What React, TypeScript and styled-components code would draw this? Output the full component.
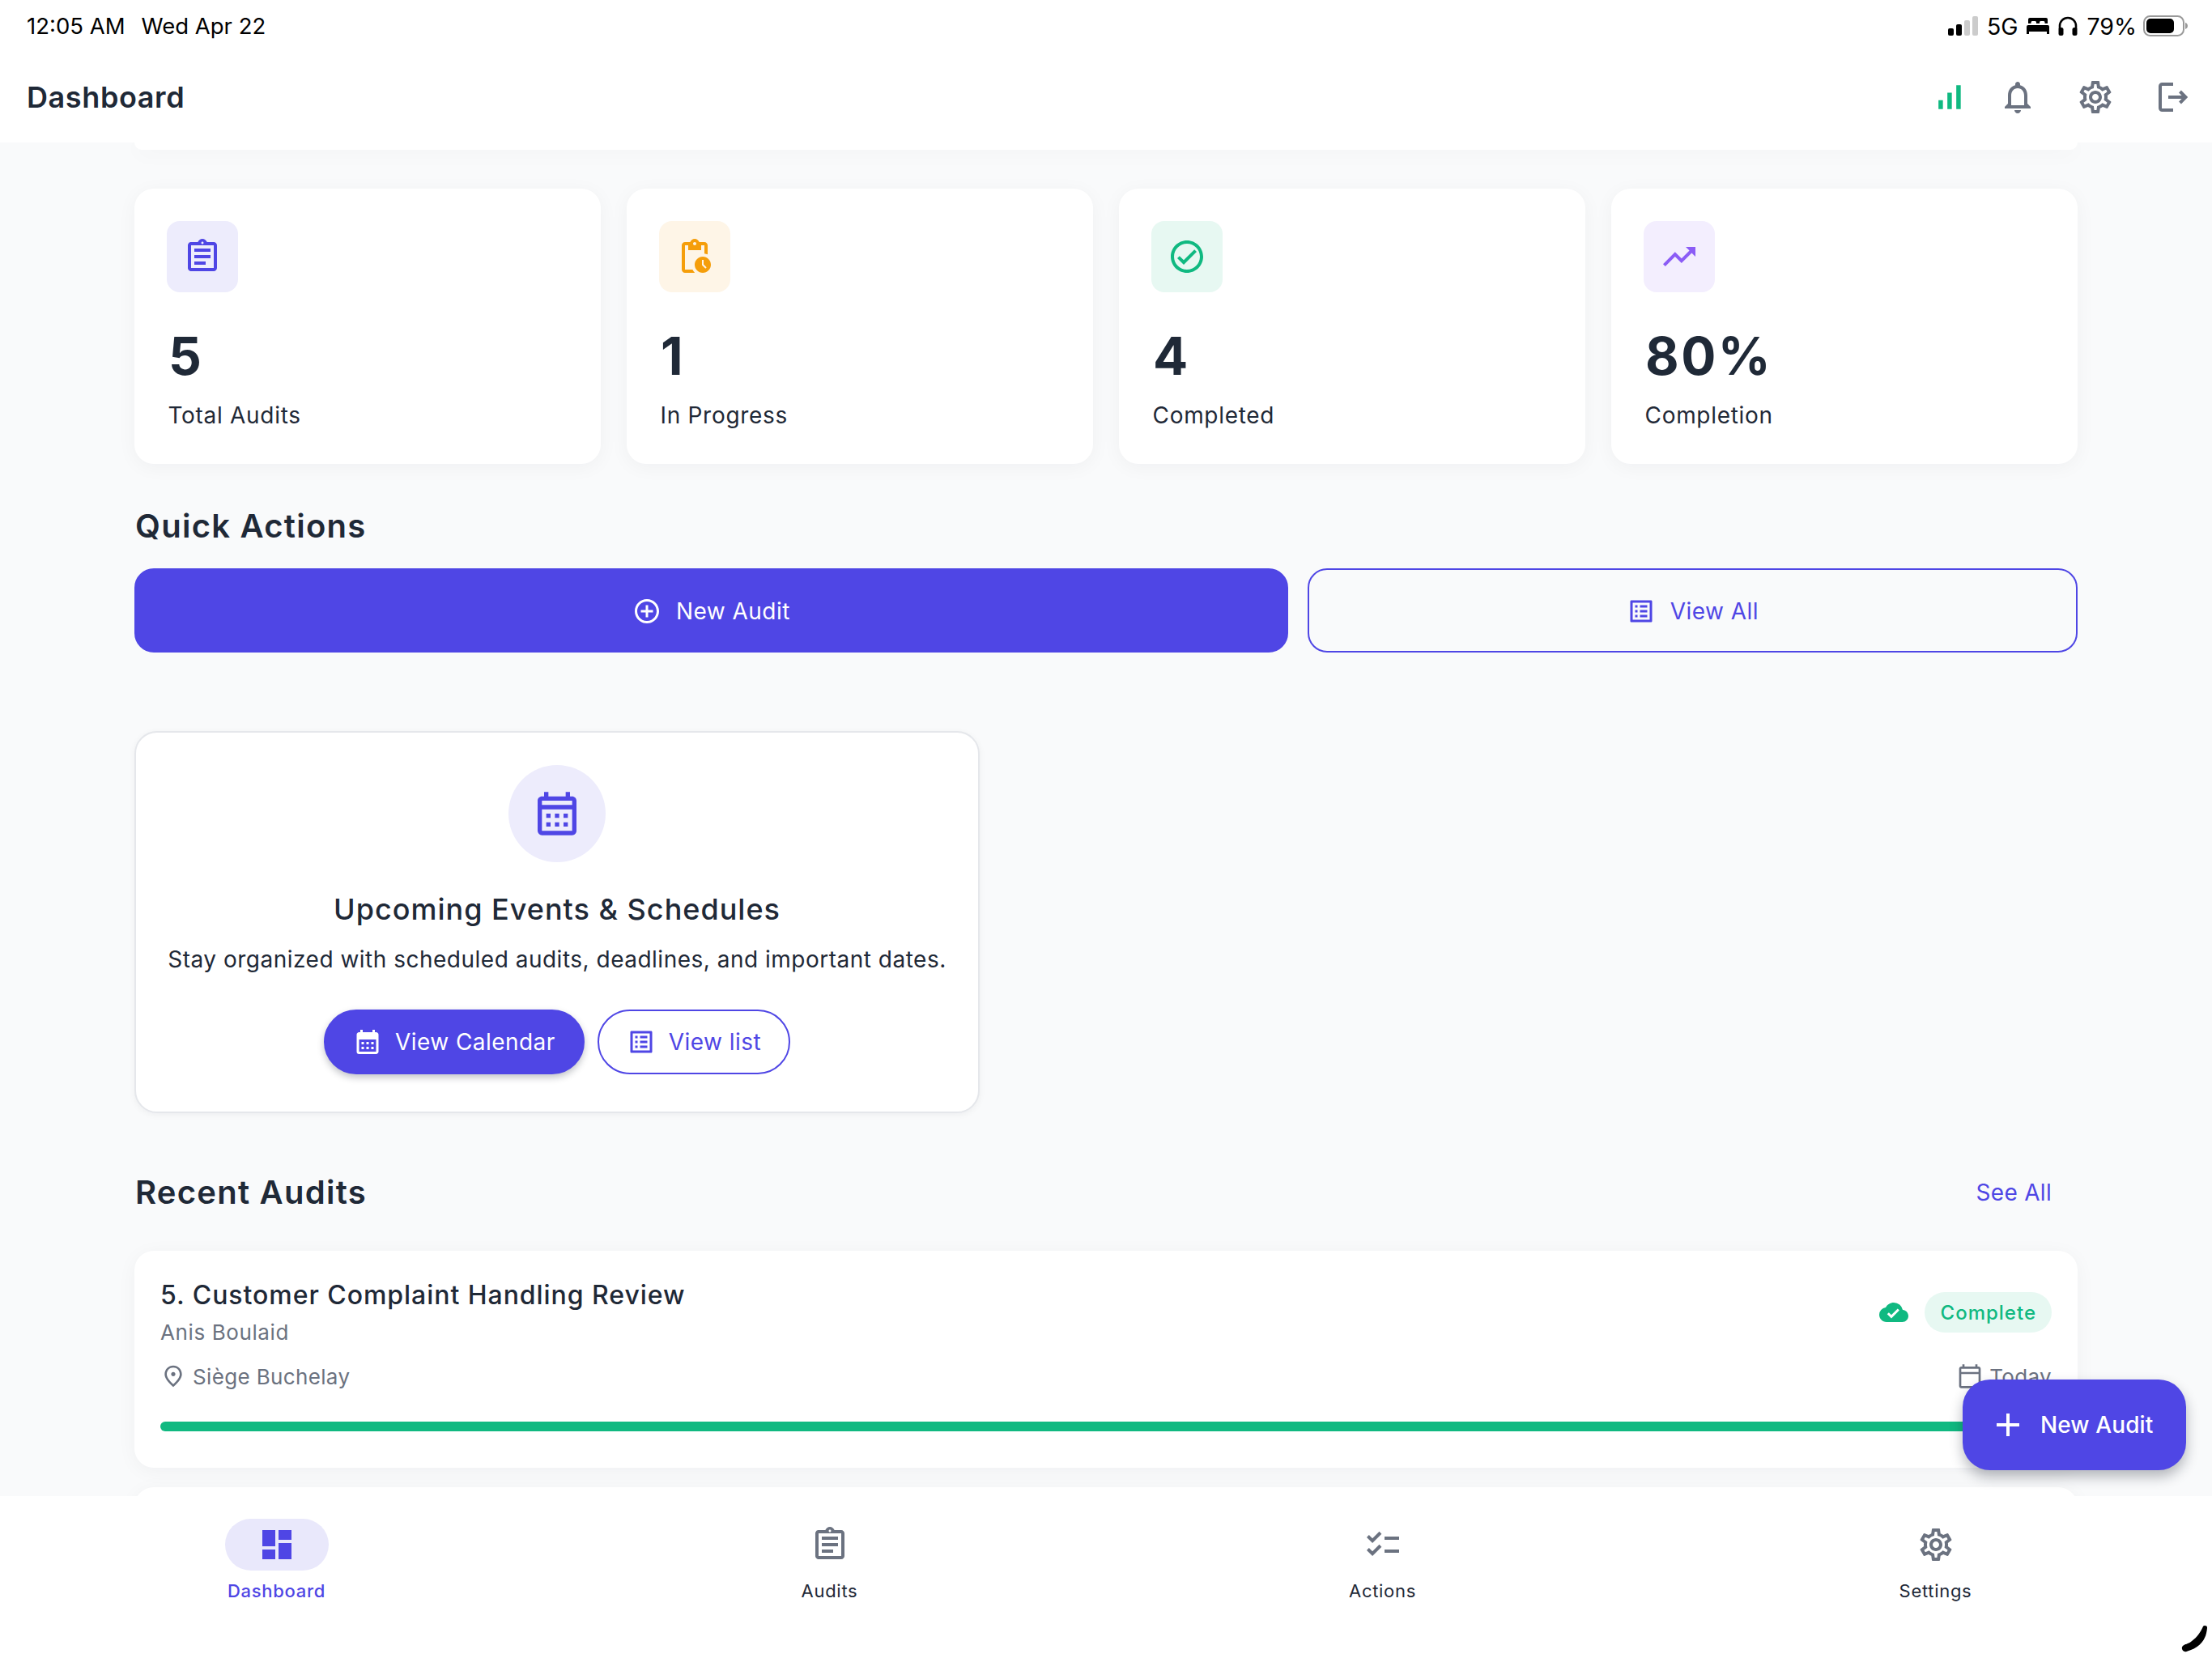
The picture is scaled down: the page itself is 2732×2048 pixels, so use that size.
import React from "react";
import styled, { createGlobalStyle } from "styled-components";
import {
  MdOutlineAssignment,
  MdOutlinePendingActions,
  MdOutlineCheckCircle,
  MdTrendingUp,
  MdAddCircleOutline,
  MdOutlineListAlt,
  MdOutlineCalendarMonth,
  MdCalendarMonth,
  MdCloudDone,
  MdOutlinePlace,
  MdOutlineCalendarToday,
  MdAdd,
  MdDashboard,
  MdChecklist,
  MdOutlineSettings,
  MdOutlineNotifications,
  MdSignalCellularAlt,
} from "react-icons/md";

const INDIGO = "#4f46e5";
const INK = "#1f2937";
const GRAY = "#6b7280";

const Global = createGlobalStyle`
  html, body { margin: 0; padding: 0; background: #f9fafb; }
  * { box-sizing: border-box; }
  body { font-family: Inter, "Noto Sans", sans-serif; }
`;

const Page = styled.div`
  position: relative;
  width: 2732px;
  height: 2048px;
  overflow: hidden;
  display: flex;
  flex-direction: column;
  background: #f9fafb;
  color: ${INK};
`;

const Top = styled.header`
  position: relative;
  z-index: 2;
  flex: none;
  height: 176px;
  background: #fff;
`;

const StatusBar = styled.div`
  height: 64px;
  padding: 0 30px 0 33px;
  display: flex;
  align-items: center;
  justify-content: space-between;
  color: #000;
  font-weight: 400;
`;

const StatusGroup = styled.div<{ $gap: number; $size: number }>`
  display: flex;
  align-items: center;
  gap: ${(p) => p.$gap}px;
  font-size: ${(p) => p.$size}px;
`;

const HeaderRow = styled.div`
  height: 112px;
  padding: 0 30px 0 33px;
  display: flex;
  align-items: center;
  justify-content: space-between;
`;

const PageTitle = styled.h1`
  margin: 0;
  font-size: 36px;
  line-height: 44px;
  font-weight: 600;
  letter-spacing: 0.6px;
  color: ${INK};
`;

const HeaderIcons = styled.div`
  display: flex;
  align-items: center;
  gap: 48px;
  color: ${GRAY};
`;

const SignalIcon = styled(MdSignalCellularAlt)`
  color: #10b981;
  margin-right: -9px;
`;

const LogoutGlyph = styled.svg`
  margin-left: 6px;
`;

const BatteryGlyph = styled.svg`
  margin-left: -3px;
`;

const Main = styled.main`
  flex: 1;
  min-height: 0;
  overflow: hidden;
  padding: 0 166px;
  display: flex;
  flex-direction: column;
`;

const cardShadow = "0 4px 24px rgba(17, 24, 39, 0.045)";

const ScrolledEdge = styled.div`
  flex: none;
  height: 9px;
  background: #fff;
  border-radius: 0 0 24px 24px;
  box-shadow: ${cardShadow};
`;

const StatGrid = styled.section`
  flex: none;
  margin-top: 48px;
  display: grid;
  grid-template-columns: repeat(4, 1fr);
  gap: 32px;
`;

const StatCard = styled.div`
  height: 340px;
  padding: 40px;
  background: #fff;
  border-radius: 24px;
  box-shadow: ${cardShadow};
`;

const IconTile = styled.div<{ $tint: string; $color: string }>`
  width: 88px;
  height: 88px;
  border-radius: 16px;
  display: flex;
  align-items: center;
  justify-content: center;
  background: ${(p) => p.$tint};
  color: ${(p) => p.$color};
`;

const StatValue = styled.div`
  margin-top: 40px;
  padding-left: 2px;
  font-size: 64px;
  line-height: 77px;
  font-weight: 700;
  letter-spacing: 2.5px;
  color: ${INK};
`;

const StatLabel = styled.div`
  margin-top: 15px;
  padding-left: 1.5px;
  font-size: 28px;
  line-height: 40px;
  font-weight: 400;
  letter-spacing: 0.7px;
  color: ${INK};
`;

const SectionTitle = styled.h2`
  margin: 0;
  padding-left: 1px;
  font-size: 40px;
  line-height: 48px;
  font-weight: 600;
  letter-spacing: 1.25px;
  color: ${INK};
`;

const QuickSection = styled.section`
  flex: none;
  margin-top: 53px;
`;

const QuickRow = styled.div`
  margin-top: 28px;
  display: flex;
  gap: 24px;
`;

const QuickButton = styled.div<{ $primary?: boolean; $grow: number }>`
  flex: ${(p) => p.$grow} 1 0;
  height: 104px;
  padding-top: 1px;
  border-radius: 24px;
  border: 2px solid ${INDIGO};
  background: ${(p) => (p.$primary ? INDIGO : "transparent")};
  color: ${(p) => (p.$primary ? "#fff" : INDIGO)};
  display: flex;
  align-items: center;
  justify-content: center;
  gap: 18px;
  font-size: 28px;
  letter-spacing: 0.45px;
`;

const EventsCard = styled.section`
  flex: none;
  align-self: flex-start;
  margin-top: 97px;
  width: 1044px;
  padding: 40px 40px 46px;
  background: #fff;
  border: 2px solid #e5e7eb;
  border-radius: 28px;
  box-shadow: 0 2px 8px rgba(17, 24, 39, 0.05);
  display: flex;
  flex-direction: column;
  align-items: center;
`;

const EventsBadge = styled.div`
  width: 120px;
  height: 120px;
  border-radius: 50%;
  background: #edecfc;
  color: ${INDIGO};
  display: flex;
  align-items: center;
  justify-content: center;
`;

const EventsTitle = styled.h3`
  margin: 36px 0 0;
  font-size: 36px;
  line-height: 44px;
  font-weight: 500;
  letter-spacing: 1px;
  color: ${INK};
`;

const EventsText = styled.p`
  margin: 20px 0 0;
  font-size: 28px;
  line-height: 40px;
  letter-spacing: 0.5px;
  white-space: nowrap;
  color: ${INK};
`;

const EventsActions = styled.div`
  margin-top: 42px;
  display: flex;
  gap: 16px;
`;

const PillButton = styled.div<{ $primary?: boolean }>`
  height: 80px;
  padding: 0 34px;
  border-radius: 40px;
  border: 2px solid ${INDIGO};
  background: ${(p) => (p.$primary ? INDIGO : "#fff")};
  color: ${(p) => (p.$primary ? "#fff" : INDIGO)};
  box-shadow: ${(p) => (p.$primary ? "0 4px 8px rgba(17, 24, 39, 0.25)" : "none")};
  display: flex;
  align-items: center;
  gap: 16px;
  font-size: 28px;
  letter-spacing: 0.45px;
`;

const RecentHeader = styled.div`
  flex: none;
  margin-top: 74px;
  padding-right: 32px;
  display: flex;
  align-items: center;
  justify-content: space-between;
`;

const SeeAll = styled.span`
  font-size: 28px;
  line-height: 40px;
  letter-spacing: 0.3px;
  color: ${INDIGO};
`;

const AuditCard = styled.article`
  flex: none;
  margin-top: 48px;
  padding: 35px 32px 45px;
  background: #fff;
  border-radius: 24px;
  box-shadow: ${cardShadow};
`;

const NextCard = styled.div`
  flex: none;
  margin-top: 24px;
  height: 200px;
  background: #fff;
  border-radius: 24px;
  box-shadow: ${cardShadow};
`;

const AuditTop = styled.div`
  display: flex;
  align-items: center;
  justify-content: space-between;
`;

const AuditTitle = styled.div`
  font-size: 32px;
  line-height: 40px;
  font-weight: 500;
  letter-spacing: 0.95px;
  color: ${INK};
`;

const AuditOwner = styled.div`
  margin-top: 10px;
  font-size: 26px;
  line-height: 32px;
  letter-spacing: 0.6px;
  color: ${GRAY};
`;

const AuditStatus = styled.div`
  display: flex;
  align-items: center;
  gap: 20px;
  color: #10b981;
`;

const StatusBadge = styled.span`
  height: 50px;
  padding: 0 19px 0 20px;
  border-radius: 25px;
  background: #e7f8f2;
  color: #10b981;
  display: flex;
  align-items: center;
  font-size: 24px;
  font-weight: 500;
  letter-spacing: 1px;
`;

const AuditMeta = styled.div`
  margin-top: 21px;
  height: 34px;
  display: flex;
  align-items: center;
  justify-content: space-between;
  font-size: 26px;
  letter-spacing: 0.35px;
  color: ${GRAY};
`;

const MetaItem = styled.span`
  display: flex;
  align-items: center;
  gap: 8px;
`;

const Progress = styled.div`
  margin-top: 39px;
  height: 12px;
  border-radius: 6px;
  background: #10b981;
`;

const Fab = styled.div`
  position: absolute;
  z-index: 3;
  left: 2424px;
  top: 1704px;
  width: 276px;
  height: 112px;
  padding-left: 32px;
  border-radius: 34px;
  background: ${INDIGO};
  box-shadow: 0 8px 16px rgba(17, 24, 39, 0.3);
  color: #fff;
  display: flex;
  align-items: center;
  gap: 16px;
  font-size: 28px;
  font-weight: 500;
  letter-spacing: 0.1px;
`;

const BottomNav = styled.nav`
  position: relative;
  z-index: 2;
  flex: none;
  height: 200px;
  background: #fff;
  display: grid;
  grid-template-columns: repeat(4, 1fr);
`;

const NavItem = styled.div`
  padding-top: 28px;
  display: flex;
  flex-direction: column;
  align-items: center;
`;

const NavIcon = styled.div<{ $active?: boolean }>`
  width: 128px;
  height: 64px;
  border-radius: 32px;
  background: ${(p) => (p.$active ? "#e9e8fb" : "transparent")};
  color: ${(p) => (p.$active ? INDIGO : GRAY)};
  display: flex;
  align-items: center;
  justify-content: center;
`;

const NavLabel = styled.span<{ $active?: boolean }>`
  margin-top: 11px;
  font-size: 22px;
  line-height: 28px;
  font-weight: ${(p) => (p.$active ? 500 : 400)};
  letter-spacing: 0.7px;
  color: ${(p) => (p.$active ? INDIGO : INK)};
`;

const CornerMark = styled.svg`
  position: absolute;
  z-index: 3;
  left: 2690px;
  top: 2004px;
`;

const Bars = () => (
  <svg width="37" height="24" viewBox="0 0 37 24">
    <rect x="0" y="15" width="7" height="9" rx="2" fill="#000" />
    <rect x="10" y="10" width="7" height="14" rx="2" fill="#000" />
    <rect x="20" y="5" width="7" height="19" rx="2" fill="#ccc" />
    <rect x="30" y="0" width="7" height="24" rx="2" fill="#ccc" />
  </svg>
);

const Bed = () => (
  <svg width="28" height="20" viewBox="0 0 28 20">
    <path
      d="M4 0h20a2 2 0 0 1 2 2v5h-3.500V5.500a1.500 1.500 0 0 0-1.500-1.500h-3.500a1.500 1.500 0 0 0-1.500 1.500V7h-4V5.500A1.500 1.500 0 0 0 10.500 4H7a1.500 1.500 0 0 0-1.500 1.500V7H2V2a2 2 0 0 1 2-2zM2 9h24a2 2 0 0 1 2 2v9h-3v-3H3v3H0v-9a2 2 0 0 1 2-2z"
      fill="#000"
    />
  </svg>
);

const Headphones = () => (
  <svg width="24" height="24" viewBox="0 0 24 24">
    <path d="M2 16v-4a10 10 0 0 1 20 0v4" fill="none" stroke="#000" strokeWidth="2.600" />
    <rect x="0.500" y="14" width="6" height="10" rx="2.500" fill="#000" />
    <rect x="17.500" y="14" width="6" height="10" rx="2.500" fill="#000" />
  </svg>
);

const Battery = () => (
  <BatteryGlyph width="55" height="26" viewBox="0 0 55 26">
    <rect x="1" y="1" width="49" height="24" rx="7.500" fill="none" stroke="#999" strokeWidth="2" />
    <rect x="4" y="4" width="34" height="18" rx="5" fill="#000" />
    <path d="M52 9c1.800.6 3 2.200 3 4s-1.200 3.400-3 4z" fill="#999" />
  </BatteryGlyph>
);

const Logout = () => (
  <LogoutGlyph width="36" height="36" viewBox="0 0 36 36" fill="none" stroke="#6b7280" strokeWidth="4">
    <path d="M18 2H4.500A2.500 2.500 0 0 0 2 4.500v27A2.500 2.500 0 0 0 4.500 34H18" />
    <path d="M12 18h21M26.500 11l7 7-7 7" />
  </LogoutGlyph>
);

const stats = [
  { value: "5", label: "Total Audits", tint: "#edecfc", color: INDIGO, Icon: MdOutlineAssignment },
  { value: "1", label: "In Progress", tint: "#fef5e7", color: "#f59e0b", Icon: MdOutlinePendingActions },
  { value: "4", label: "Completed", tint: "#e7f8f2", color: "#10b981", Icon: MdOutlineCheckCircle },
  { value: "80%", label: "Completion", tint: "#f3eefe", color: "#8b5cf6", Icon: MdTrendingUp },
];

const nav = [
  { label: "Dashboard", Icon: MdDashboard, active: true },
  { label: "Audits", Icon: MdOutlineAssignment, active: false },
  { label: "Actions", Icon: MdChecklist, active: false },
  { label: "Settings", Icon: MdOutlineSettings, active: false },
];

export default function App() {
  return (
    <Page>
      <Global />
      <Top>
        <StatusBar>
          <StatusGroup $gap={20} $size={27.5}>
            <span>12:05 AM</span>
            <span>Wed Apr 22</span>
          </StatusGroup>
          <StatusGroup $gap={11} $size={28.5}>
            <Bars />
            <span>5G</span>
            <Bed />
            <Headphones />
            <span>79%</span>
            <Battery />
          </StatusGroup>
        </StatusBar>
        <HeaderRow>
          <PageTitle>Dashboard</PageTitle>
          <HeaderIcons>
            <SignalIcon size={44} />
            <MdOutlineNotifications size={48} />
            <MdOutlineSettings size={48} />
            <Logout />
          </HeaderIcons>
        </HeaderRow>
      </Top>

      <Main>
        <ScrolledEdge />
        <StatGrid>
          {stats.map(({ value, label, tint, color, Icon }) => (
            <StatCard key={label}>
              <IconTile $tint={tint} $color={color}>
                <Icon size={48} />
              </IconTile>
              <StatValue>{value}</StatValue>
              <StatLabel>{label}</StatLabel>
            </StatCard>
          ))}
        </StatGrid>

        <QuickSection>
          <SectionTitle>Quick Actions</SectionTitle>
          <QuickRow>
            <QuickButton $primary $grow={3}>
              <MdAddCircleOutline size={36} />
              New Audit
            </QuickButton>
            <QuickButton $grow={2}>
              <MdOutlineListAlt size={36} />
              View All
            </QuickButton>
          </QuickRow>
        </QuickSection>

        <EventsCard>
          <EventsBadge>
            <MdOutlineCalendarMonth size={64} />
          </EventsBadge>
          <EventsTitle>Upcoming Events &amp; Schedules</EventsTitle>
          <EventsText>Stay organized with scheduled audits, deadlines, and important dates.</EventsText>
          <EventsActions>
            <PillButton $primary>
              <MdCalendarMonth size={36} />
              View Calendar
            </PillButton>
            <PillButton>
              <MdOutlineListAlt size={36} />
              View list
            </PillButton>
          </EventsActions>
        </EventsCard>

        <RecentHeader>
          <SectionTitle>Recent Audits</SectionTitle>
          <SeeAll>See All</SeeAll>
        </RecentHeader>

        <AuditCard>
          <AuditTop>
            <div>
              <AuditTitle>5. Customer Complaint Handling Review</AuditTitle>
              <AuditOwner>Anis Boulaid</AuditOwner>
            </div>
            <AuditStatus>
              <MdCloudDone size={36} />
              <StatusBadge>Complete</StatusBadge>
            </AuditStatus>
          </AuditTop>
          <AuditMeta>
            <MetaItem>
              <MdOutlinePlace size={32} />
              Siège Buchelay
            </MetaItem>
            <MetaItem>
              <MdOutlineCalendarToday size={32} />
              Today
            </MetaItem>
          </AuditMeta>
          <Progress />
        </AuditCard>
        <NextCard />
      </Main>

      <BottomNav>
        {nav.map(({ label, Icon, active }) => (
          <NavItem key={label}>
            <NavIcon $active={active}>
              <Icon size={48} />
            </NavIcon>
            <NavLabel $active={active}>{label}</NavLabel>
          </NavItem>
        ))}
      </BottomNav>

      <Fab>
        <MdAdd size={48} />
        New Audit
      </Fab>

      <CornerMark width="40" height="40" viewBox="0 0 40 40">
        <path d="M31 5c1-1.500 5.500-1.500 5 2-1 11-5 23-25.500 29-4.500 1.300-7.500-4-4.500-7 3-2.500 6-2 10.500-5.500 8-6 11-11 14.500-18.500z" fill="#000" />
      </CornerMark>
    </Page>
  );
}
